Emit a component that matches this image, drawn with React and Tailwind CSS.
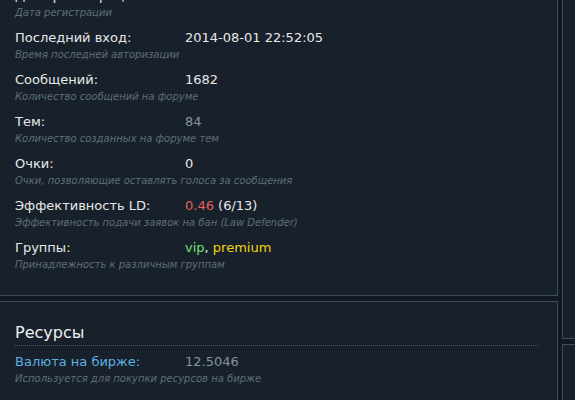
import React from "react";

const rows = [
  { label: "Дата регистрации:", value: "2011-02-14 18:03:11", desc: "Дата регистрации" },
  { label: "Последний вход:", value: "2014-08-01 22:52:05", desc: "Время последней авторизации" },
  { label: "Сообщений:", value: "1682", desc: "Количество сообщений на форуме" },
  { label: "Тем:", value: <span className="text-[#8393a3]">84</span>, desc: "Количество созданных на форуме тем" },
  { label: "Очки:", value: "0", desc: "Очки, позволяющие оставлять голоса за сообщения" },
  {
    label: "Эффективность LD:",
    value: (
      <>
        <span className="text-[#e5605a]">0.46</span> (6/13)
      </>
    ),
    desc: "Эффективность подачи заявок на бан (Law Defender)",
  },
  {
    label: "Группы:",
    value: (
      <>
        <span className="text-[#6fe06f]">vip</span>, <span className="text-[#f2d20c]">premium</span>
      </>
    ),
    desc: "Принадлежность к различным группам",
  },
];

const Row = ({ label, value, desc, blue }) => (
  <div>
    <div className="flex h-[18px] leading-[18px] text-[13px]">
      <div className={"w-[170px] " + (blue ? "text-[#5ab2e2]" : "text-[#e8e8e8]")}>{label}</div>
      <div className="text-[#e8e8e8]">{value}</div>
    </div>
    <div className="mt-[1px] h-[14px] leading-[14px] text-[10px] italic text-[#5d6d7b]">{desc}</div>
  </div>
);

export default function App() {
  return (
    <div
      className="w-[575px] h-[400px] overflow-hidden bg-[#111922] flex gap-[4px]"
      style={{ fontFamily: '"DejaVu Sans", Verdana, sans-serif' }}
    >
      <div className="-ml-[2px] w-[560px] shrink-0 flex flex-col gap-[5px]">
        <div className="-mt-[20px] shrink-0 border border-[#3a4d5b] bg-[#18212b] pl-[16px] pr-[20px] pt-[6px] pb-[23px] flex flex-col gap-[9px]">
          {rows.map((r, i) => (
            <Row key={i} {...r} />
          ))}
        </div>
        <div className="shrink-0 border border-[#3a4d5b] bg-[#18212b] pl-[16px] pr-[19px] pt-[20px] h-[200px]">
          <div className="leading-[22px] text-[16px] text-[#f0f0f0] pb-[1px] border-b border-dotted border-[#4c5e6c]">
            Ресурсы
          </div>
          <div className="mt-[7px] flex flex-col gap-[9px]">
            <Row
              blue
              label="Валюта на бирже:"
              value={<span className="text-[#8393a3]">12.5046</span>}
              desc="Используется для покупки ресурсов на бирже"
            />
            <div className="mt-[2px]">
              <Row label="Прибыль:" value="" desc="" />
            </div>
          </div>
        </div>
      </div>
      <div className="w-[40px] shrink-0 flex flex-col gap-[5px]">
        <div className="-mt-[20px] shrink-0 h-[359px] border border-[#3a4d5b] bg-[#18212b]" />
        <div className="shrink-0 h-[100px] border border-[#3a4d5b] bg-[#18212b]" />
      </div>
    </div>
  );
}
